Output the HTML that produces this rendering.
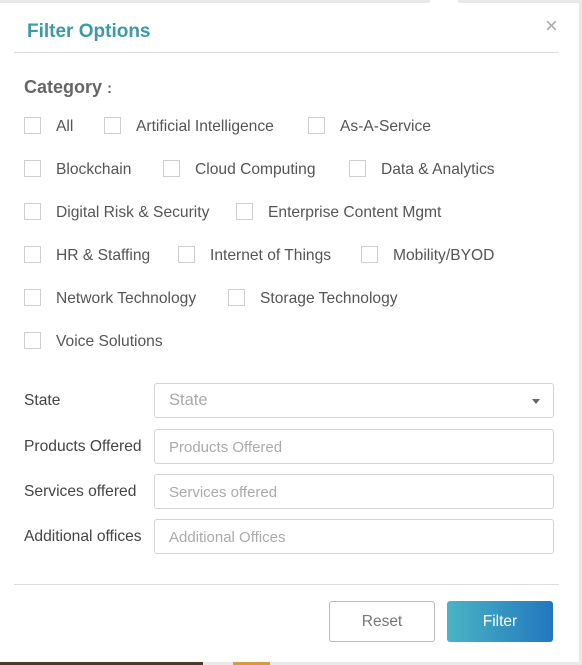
<!DOCTYPE html>
<html><head><style>
body{margin:0;width:582px;height:665px;background:#e9e9e9;position:relative;overflow:hidden;font-family:"Liberation Sans",sans-serif;}
.m{position:absolute;left:0;top:3px;width:579px;height:659px;background:#fff;}
.a{position:absolute;}
.cb{position:absolute;width:15px;height:15px;border:1px solid #cfcfcf;background:#fff;}
.l{position:absolute;font-size:15.6px;color:#555;line-height:16px;}
.in{position:absolute;left:154px;width:400px;border:1px solid #d4d4d4;border-radius:3px;background:#fff;font-size:15px;color:#aaa;box-sizing:border-box;padding-left:14px;}
</style></head><body>
<div class="a" style="left:430px;top:0;width:28px;height:4px;background:#fff"></div>
<div class="a" style="left:0;top:662px;width:203px;height:3px;background:#4a3a28"></div>
<div class="a" style="left:233px;top:662px;width:37px;height:3px;background:#d89a3a"></div>
<div class="m"></div>
<div class="a" style="left:27px;top:21px;font-size:19px;font-weight:bold;color:#3a9aa5">Filter Options</div>
<div class="a" style="left:545px;top:15px;font-size:22px;color:#aaa;line-height:22px">×</div>
<div class="a" style="left:14px;top:52px;width:545px;height:1px;background:#ddd"></div>
<div class="a" style="left:24px;top:77px;font-size:18px;font-weight:bold;color:#666">Category <span style="font-size:15px">:</span></div>

<div class="cb" style="left:24px;top:117px"></div><div class="l" style="left:56px;top:119px">All</div>
<div class="cb" style="left:104px;top:117px"></div><div class="l" style="left:136px;top:119px">Artificial Intelligence</div>
<div class="cb" style="left:308px;top:117px"></div><div class="l" style="left:340px;top:119px">As-A-Service</div>

<div class="cb" style="left:24px;top:160px"></div><div class="l" style="left:56px;top:162px">Blockchain</div>
<div class="cb" style="left:163px;top:160px"></div><div class="l" style="left:195px;top:162px">Cloud Computing</div>
<div class="cb" style="left:349px;top:160px"></div><div class="l" style="left:381px;top:162px">Data &amp; Analytics</div>

<div class="cb" style="left:24px;top:203px"></div><div class="l" style="left:56px;top:205px">Digital Risk &amp; Security</div>
<div class="cb" style="left:236px;top:203px"></div><div class="l" style="left:268px;top:205px">Enterprise Content Mgmt</div>

<div class="cb" style="left:24px;top:246px"></div><div class="l" style="left:56px;top:248px">HR &amp; Staffing</div>
<div class="cb" style="left:178px;top:246px"></div><div class="l" style="left:210px;top:248px">Internet of Things</div>
<div class="cb" style="left:361px;top:246px"></div><div class="l" style="left:393px;top:248px">Mobility/BYOD</div>

<div class="cb" style="left:24px;top:289px"></div><div class="l" style="left:56px;top:291px">Network Technology</div>
<div class="cb" style="left:228px;top:289px"></div><div class="l" style="left:260px;top:291px">Storage Technology</div>

<div class="cb" style="left:24px;top:332px"></div><div class="l" style="left:56px;top:334px">Voice Solutions</div>

<div class="l" style="left:24px;top:393px;color:#444">State</div>
<div class="in" style="top:383px;height:35px;line-height:33px;font-size:16.5px">State</div>
<div class="a" style="left:532px;top:399px;width:0;height:0;border-left:4px solid transparent;border-right:4px solid transparent;border-top:5px solid #666"></div>
<div class="l" style="left:24px;top:439px;color:#444">Products Offered</div>
<div class="in" style="top:429px;height:35px;line-height:35px">Products Offered</div>
<div class="l" style="left:24px;top:484px;color:#444">Services offered</div>
<div class="in" style="top:474px;height:35px;line-height:35px">Services offered</div>
<div class="l" style="left:24px;top:529px;color:#444">Additional offices</div>
<div class="in" style="top:519px;height:35px;line-height:35px">Additional Offices</div>

<div class="a" style="left:14px;top:584px;width:545px;height:1px;background:#ddd"></div>
<div class="a" style="left:329px;top:601px;width:106px;height:41px;box-sizing:border-box;border:1px solid #bbb;border-radius:3px;text-align:center;line-height:40px;font-size:15.5px;color:#777">Reset</div>
<div class="a" style="left:447px;top:601px;width:106px;height:41px;border-radius:3px;background:linear-gradient(90deg,#4ab4c4,#2277bf);text-align:center;line-height:41px;font-size:15.5px;color:#fff">Filter</div>
</body></html>
